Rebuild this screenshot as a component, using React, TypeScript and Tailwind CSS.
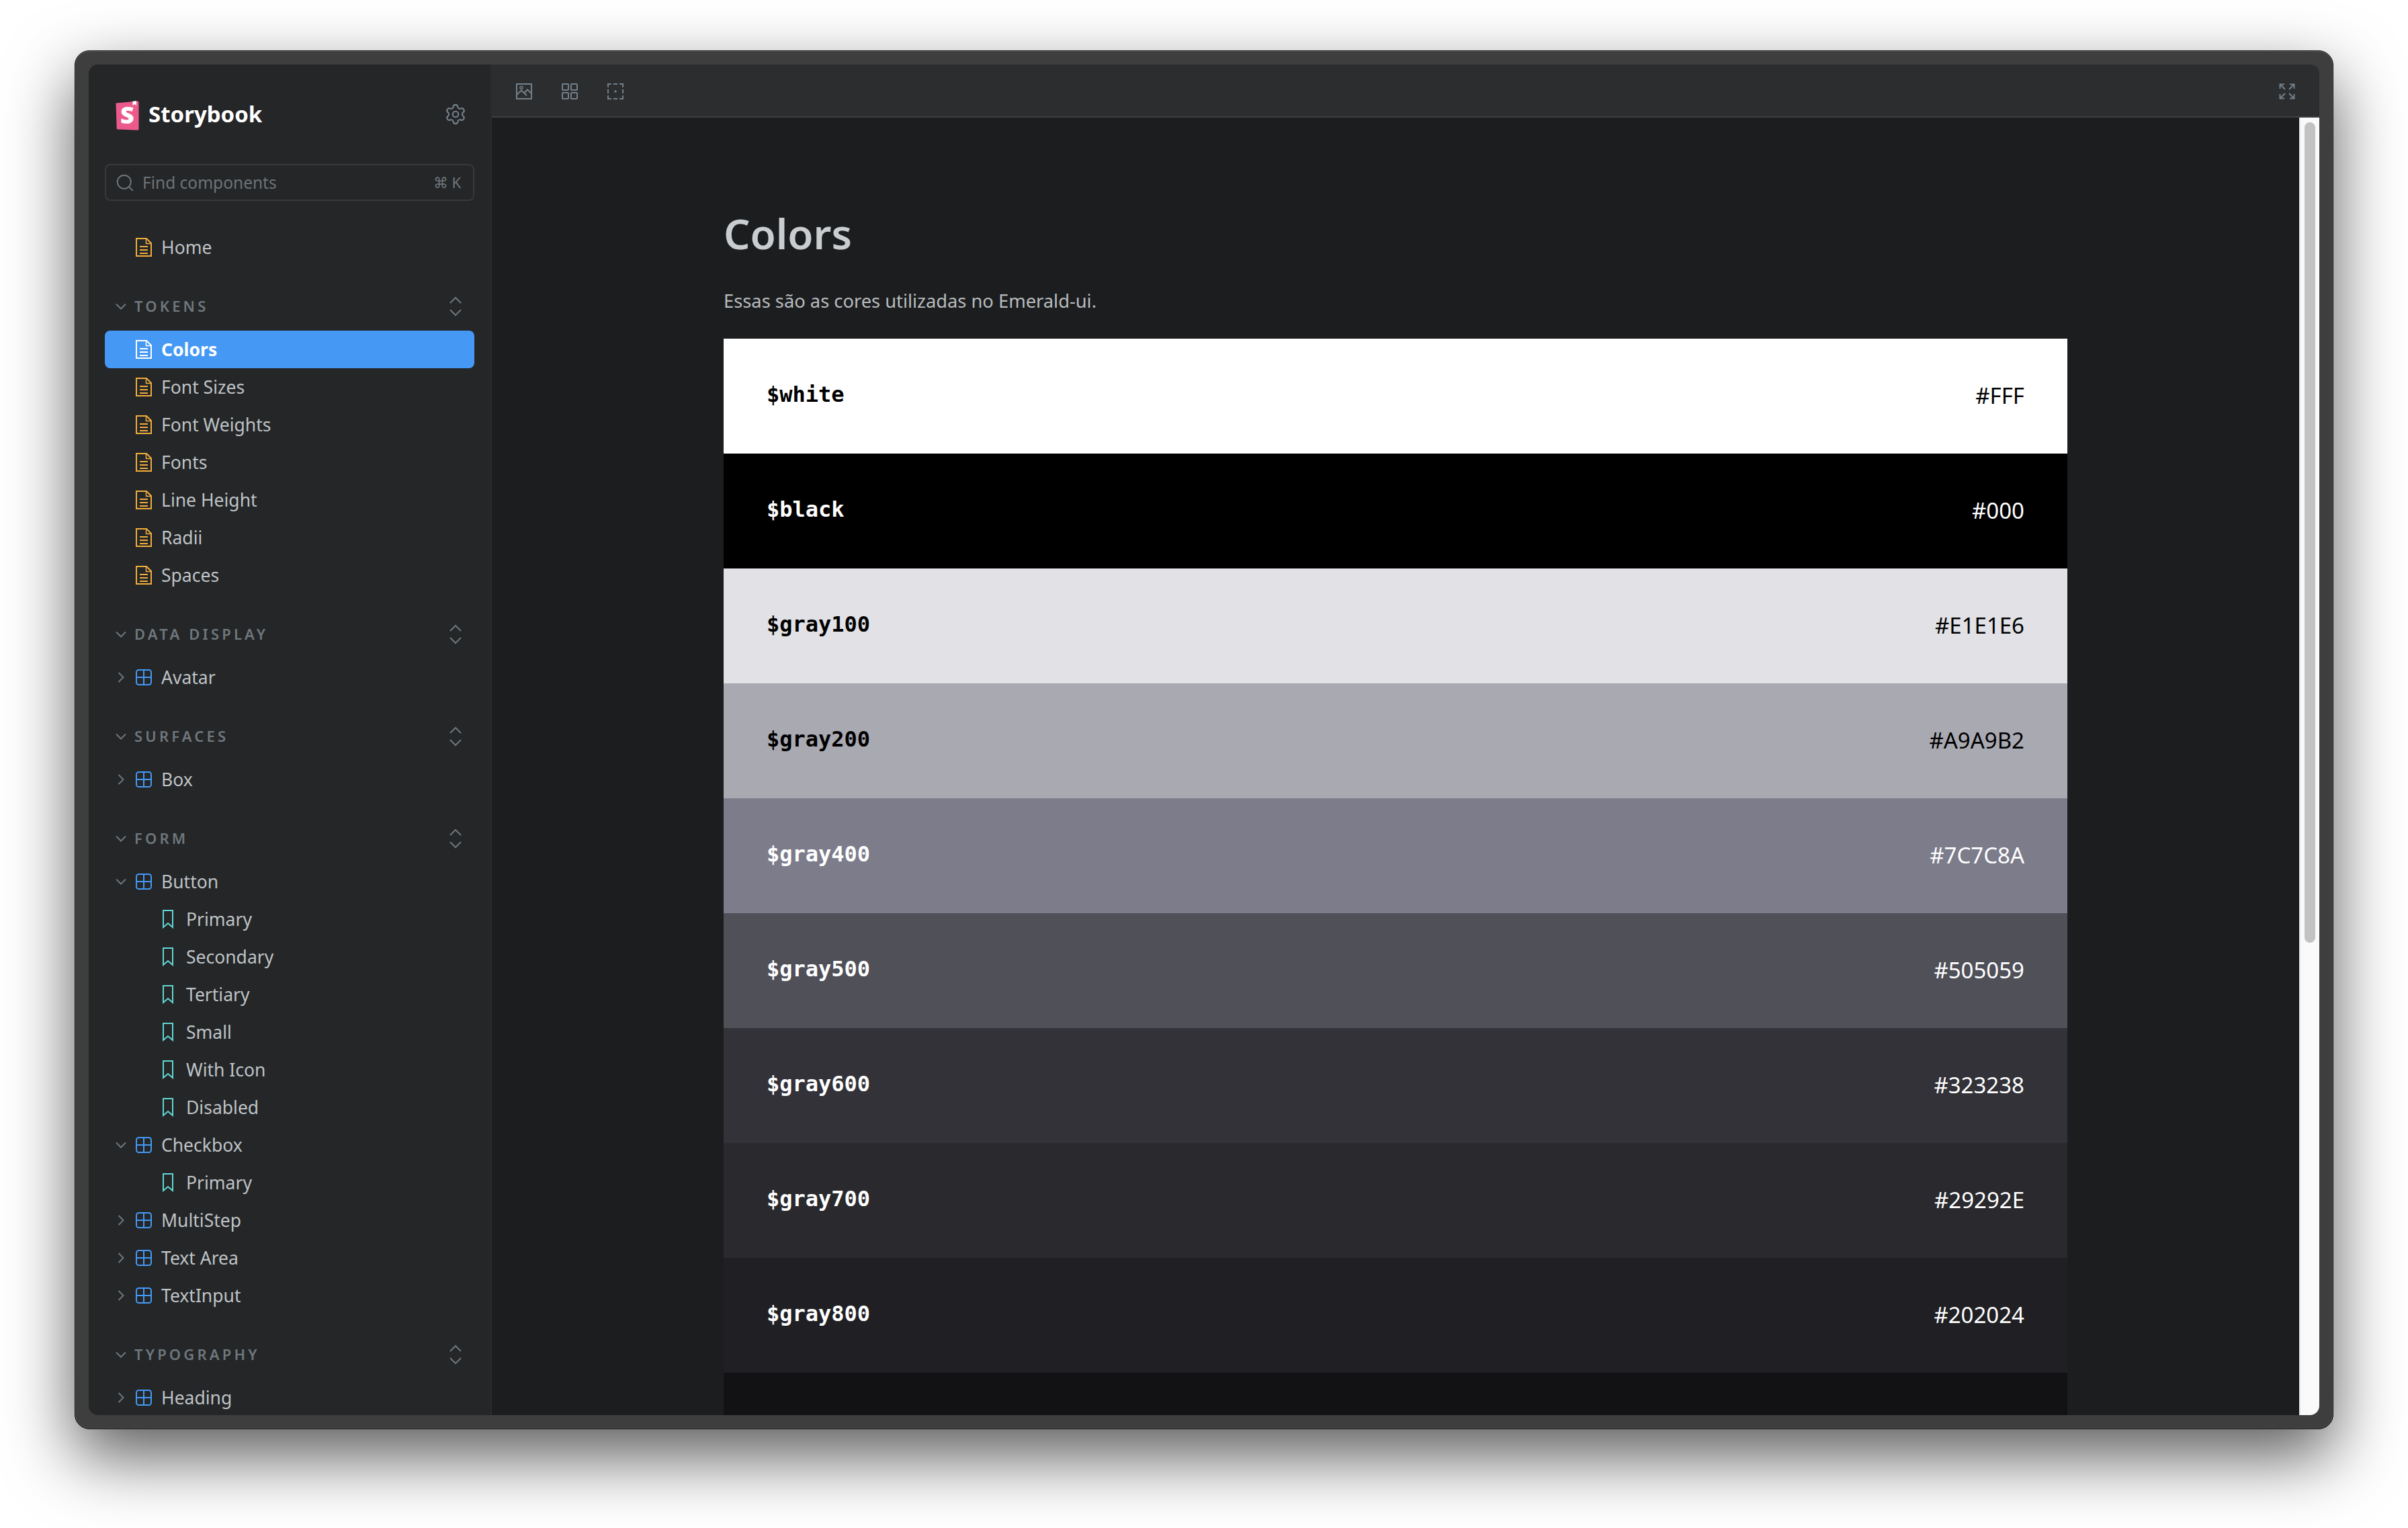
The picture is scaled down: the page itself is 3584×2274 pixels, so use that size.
import { Search, Settings } from 'lucide-react';

type TreeNode = {
  label: string;
  kind: 'doc' | 'component' | 'story';
  open?: boolean;
  active?: boolean;
};

type SectionData = {
  title: string;
  items: TreeNode[];
};

const sections: SectionData[] = [
  {
    title: 'Tokens',
    items: [
      { label: 'Colors', kind: 'doc', active: true },
      { label: 'Font Sizes', kind: 'doc' },
      { label: 'Font Weights', kind: 'doc' },
      { label: 'Fonts', kind: 'doc' },
      { label: 'Line Height', kind: 'doc' },
      { label: 'Radii', kind: 'doc' },
      { label: 'Spaces', kind: 'doc' },
    ],
  },
  { title: 'Data Display', items: [{ label: 'Avatar', kind: 'component' }] },
  { title: 'Surfaces', items: [{ label: 'Box', kind: 'component' }] },
  {
    title: 'Form',
    items: [
      { label: 'Button', kind: 'component', open: true },
      { label: 'Primary', kind: 'story' },
      { label: 'Secondary', kind: 'story' },
      { label: 'Tertiary', kind: 'story' },
      { label: 'Small', kind: 'story' },
      { label: 'With Icon', kind: 'story' },
      { label: 'Disabled', kind: 'story' },
      { label: 'Checkbox', kind: 'component', open: true },
      { label: 'Primary', kind: 'story' },
      { label: 'MultiStep', kind: 'component' },
      { label: 'Text Area', kind: 'component' },
      { label: 'TextInput', kind: 'component' },
    ],
  },
  { title: 'Typography', items: [{ label: 'Heading', kind: 'component' }] },
];

const swatches = [
  { name: '$white', hex: '#FFF', bg: 'bg-[#ffffff]', text: 'text-black' },
  { name: '$black', hex: '#000', bg: 'bg-[#000000]', text: 'text-white' },
  { name: '$gray100', hex: '#E1E1E6', bg: 'bg-[#e1e1e6]', text: 'text-black' },
  { name: '$gray200', hex: '#A9A9B2', bg: 'bg-[#a9a9b2]', text: 'text-black' },
  { name: '$gray400', hex: '#7C7C8A', bg: 'bg-[#7c7c8a]', text: 'text-white' },
  { name: '$gray500', hex: '#505059', bg: 'bg-[#505059]', text: 'text-white' },
  { name: '$gray600', hex: '#323238', bg: 'bg-[#323238]', text: 'text-white' },
  { name: '$gray700', hex: '#29292E', bg: 'bg-[#29292e]', text: 'text-white' },
  { name: '$gray800', hex: '#202024', bg: 'bg-[#202024]', text: 'text-white' },
];

const Logo = () => (
  <svg width="37" height="52" viewBox="0 -5 36 52" className="shrink-0">
    <path
      d="M1 4.500 33 1.400c1.200-.1 2 .5 2 1.600v40c0 1.200-.8 1.900-2 1.800L4 43.600c-1-.1-1.700-.7-1.800-1.700z"
      fill="#ec5a8c"
    />
    <path d="M26 1.800 31.500 1.300V8L28.800 6 26 8z" fill="#ffffff" />
    <text
      x="18"
      y="35"
      textAnchor="middle"
      fontSize="36"
      fontWeight="900"
      fill="#ffffff"
      fontFamily="'Noto Sans', sans-serif"
    >
      S
    </text>
  </svg>
);

const DocIcon = ({ color }: { color: string }) => (
  <svg width="24" height="28" viewBox="0 0 24 28" fill="none" stroke={color} strokeWidth="2" className="shrink-0">
    <path d="M1 1h15l7 7v19H1z" />
    <path d="M15.500 1v7.500H23" strokeWidth="1.500" />
    <path d="M6 13h12M6 18h12M6 23h12" />
  </svg>
);

const ComponentIcon = () => (
  <svg width="24" height="24" viewBox="0 0 24 24" fill="none" stroke="#4499f5" strokeWidth="2" className="shrink-0">
    <rect x="1" y="1" width="22" height="22" rx="3.500" />
    <path d="M12 1v22M1 12h22" />
  </svg>
);

const BookmarkIcon = () => (
  <svg width="16" height="28" viewBox="0 0 16 28" fill="none" stroke="#62d6d3" strokeWidth="2" className="shrink-0">
    <path d="M1 1h14v25l-7-6-7 6z" />
  </svg>
);

const Chevron = ({ open }: { open: boolean }) => (
  <svg width="16" height="16" viewBox="0 0 16 16" fill="none" stroke="#6f777c" strokeWidth="2" className="shrink-0">
    {open ? <path d="M1 4.500 8 11.500 15 4.500" /> : <path d="M4.500 1 11.500 8 4.500 15" />}
  </svg>
);

const ExpandIcon = () => (
  <svg width="20" height="30" viewBox="0 0 20 30" fill="none" stroke="#6f777c" strokeWidth="2">
    <path d="M2 10 10 2 18 10M2 20 10 28 18 20" />
  </svg>
);

const ImageToolIcon = () => (
  <svg width="24" height="24" viewBox="0 0 24 24" fill="none" stroke="#73808a" strokeWidth="2">
    <rect x="1" y="1" width="22" height="22" />
    <circle cx="8" cy="6.500" r="2" strokeWidth="1.500" />
    <path d="M1 17 8 10.500 16 18M12 14.500 17 9.500 23 15" />
  </svg>
);

const GridToolIcon = () => (
  <svg width="24" height="24" viewBox="0 0 24 24" fill="none" stroke="#73808a" strokeWidth="2">
    <rect x="1" y="1" width="9" height="9" rx="1" />
    <rect x="14" y="1" width="9" height="9" rx="1" />
    <rect x="1" y="14" width="9" height="9" rx="1" />
    <rect x="14" y="14" width="9" height="9" rx="1" />
  </svg>
);

const OutlineToolIcon = () => (
  <svg width="24" height="24" viewBox="0 0 24 24" fill="none" stroke="#73808a" strokeWidth="2">
    <path d="M6 1H1v5M9 1h6M18 1h5v5M23 9v6M23 18v5h-5M15 23H9M6 23H1v-5M1 15V9" />
    <circle cx="12" cy="12" r="1.800" fill="#73808a" stroke="none" />
  </svg>
);

const FullscreenIcon = () => (
  <svg width="24" height="24" viewBox="0 0 24 24" fill="none" stroke="#73808a" strokeWidth="2">
    <path d="M1.500 8V1.500H8M1.500 1.500 9 9M16 1.500h6.500V8M22.500 1.500 15 9M1.500 16v6.500H8M1.500 22.500 9 15M16 22.500h6.500V16M22.500 22.500 15 15" />
  </svg>
);

const TreeRow = ({ node }: { node: TreeNode }) => {
  const activeClass = node.active ? 'bg-[#4599f5] text-white font-bold' : 'text-[#bfc3c6]';

  if (node.kind === 'story') {
    return (
      <div className="flex h-[56px] items-center gap-[19px] pl-[86px] text-[26.5px] text-[#bfc3c6]">
        <BookmarkIcon />
        <span className="mt-[2px]">{node.label}</span>
      </div>
    );
  }

  return (
    <div className={`flex h-[56px] items-center rounded-[8px] text-[26.5px] ${activeClass}`}>
      {node.kind === 'doc' ? (
        <div className="w-[46px] shrink-0" />
      ) : (
        <div className="flex w-[46px] shrink-0 pl-[16px]">
          <Chevron open={!!node.open} />
        </div>
      )}
      {node.kind === 'doc' ? <DocIcon color={node.active ? '#ffffff' : '#f0ad3c'} /> : <ComponentIcon />}
      <span className="ml-[14px] mt-[2px]">{node.label}</span>
    </div>
  );
};

const Section = ({ data }: { data: SectionData }) => (
  <div className="mt-[32px]">
    <div className="flex h-[56px] items-center pl-[16px] pr-[18px]">
      <Chevron open />
      <span className="mb-[2px] ml-[12px] flex-1 text-[22px] font-semibold uppercase tracking-[0.19em] text-[#6f777c]">
        {data.title}
      </span>
      <ExpandIcon />
    </div>
    <div className="mt-[8px]">
      {data.items.map((item, i) => (
        <TreeRow key={i} node={item} />
      ))}
    </div>
  </div>
);

const Sidebar = () => (
  <aside className="h-full w-[600px] shrink-0 overflow-hidden border-r-2 border-[#292c2d] bg-[#242628] px-[24px]">
    <div className="flex h-[148px] items-center pl-[15px] pr-[11px]">
      <Logo />
      <span className="ml-[13px] flex-1 text-[33px] font-bold text-white">Storybook</span>
      <Settings size={34} strokeWidth={1.500} color="#73808a" />
    </div>
    <div className="flex h-[55px] items-center rounded-[8px] border-2 border-[#37393b] pl-[13px] pr-[18px]">
      <Search size={30} strokeWidth={1.500} color="#6f777c" className="shrink-0" />
      <span className="ml-[11px] mt-[1px] flex-1 text-[24.5px] text-[#6d7378]">Find components</span>
      <span className="text-[22px] text-[#6f777c]">⌘ K</span>
    </div>
    <div className="mt-[41px]">
      <TreeRow node={{ label: 'Home', kind: 'doc' }} />
    </div>
    {sections.map((section) => (
      <Section key={section.title} data={section} />
    ))}
  </aside>
);

const Toolbar = () => (
  <div className="flex h-[79px] shrink-0 items-center border-b-2 border-[#3d3e40] bg-[#2c2d2f] pl-[36px] pr-[36px] pt-[2px]">
    <div className="flex flex-1 items-center gap-[44px]">
      <ImageToolIcon />
      <GridToolIcon />
      <OutlineToolIcon />
    </div>
    <FullscreenIcon />
  </div>
);

const ColorRow = ({ name, hex, bg, text }: (typeof swatches)[number]) => (
  <div className={`flex h-[171px] items-center justify-between px-[64px] ${bg} ${text}`}>
    <strong className="mb-[5px] font-['DejaVu_Sans_Mono',monospace] text-[32px] font-bold">{name}</strong>
    <span className="mb-[2px] text-[33px]">{hex}</span>
  </div>
);

const Scrollbar = () => (
  <div className="h-full w-[30px] shrink-0 border-l-2 border-[#e8e8e8] bg-[#fafafa] pl-[6px] pr-[6px] pt-[7px]">
    <div className="h-[1221px] w-[16px] rounded-full bg-[#c2c2c2]" />
  </div>
);

const App = () => (
  <div className="h-[2274px] w-[3584px] overflow-hidden bg-white pl-[111px] pt-[75px] font-['Noto_Sans',sans-serif]">
    <div className="h-[2052px] w-[3362px] rounded-[22px] border border-[#111111] bg-[#3e3e3e] p-[20px] shadow-[0_40px_100px_rgba(0,0,0,0.65),inset_0_1px_0_#5c5c5c,inset_0_0_0_1px_#505050]">
      <div className="flex h-full overflow-hidden rounded-[14px]">
        <Sidebar />
        <div className="flex min-w-0 flex-1 flex-col">
          <Toolbar />
          <div className="flex min-h-0 flex-1">
            <main className="min-w-0 flex-1 overflow-hidden bg-[#1c1d1f]">
              <div className="mx-auto w-[2000px] pt-[132px]">
                <h1 className="text-[62px] font-semibold leading-[80px] text-[#c9cdcf]">Colors</h1>
                <p className="mt-[41px] text-[27.3px] leading-[40px] text-[#b8bcbe]">
                  Essas são as cores utilizadas no Emerald-ui.
                </p>
                <div className="mt-[36px]">
                  {swatches.map((swatch) => (
                    <ColorRow key={swatch.name} {...swatch} />
                  ))}
                  {/* next swatch, its label is below the fold */}
                  <div className="h-[171px] bg-[#121214]" />
                </div>
              </div>
            </main>
            <Scrollbar />
          </div>
        </div>
      </div>
    </div>
  </div>
);

export default App;
